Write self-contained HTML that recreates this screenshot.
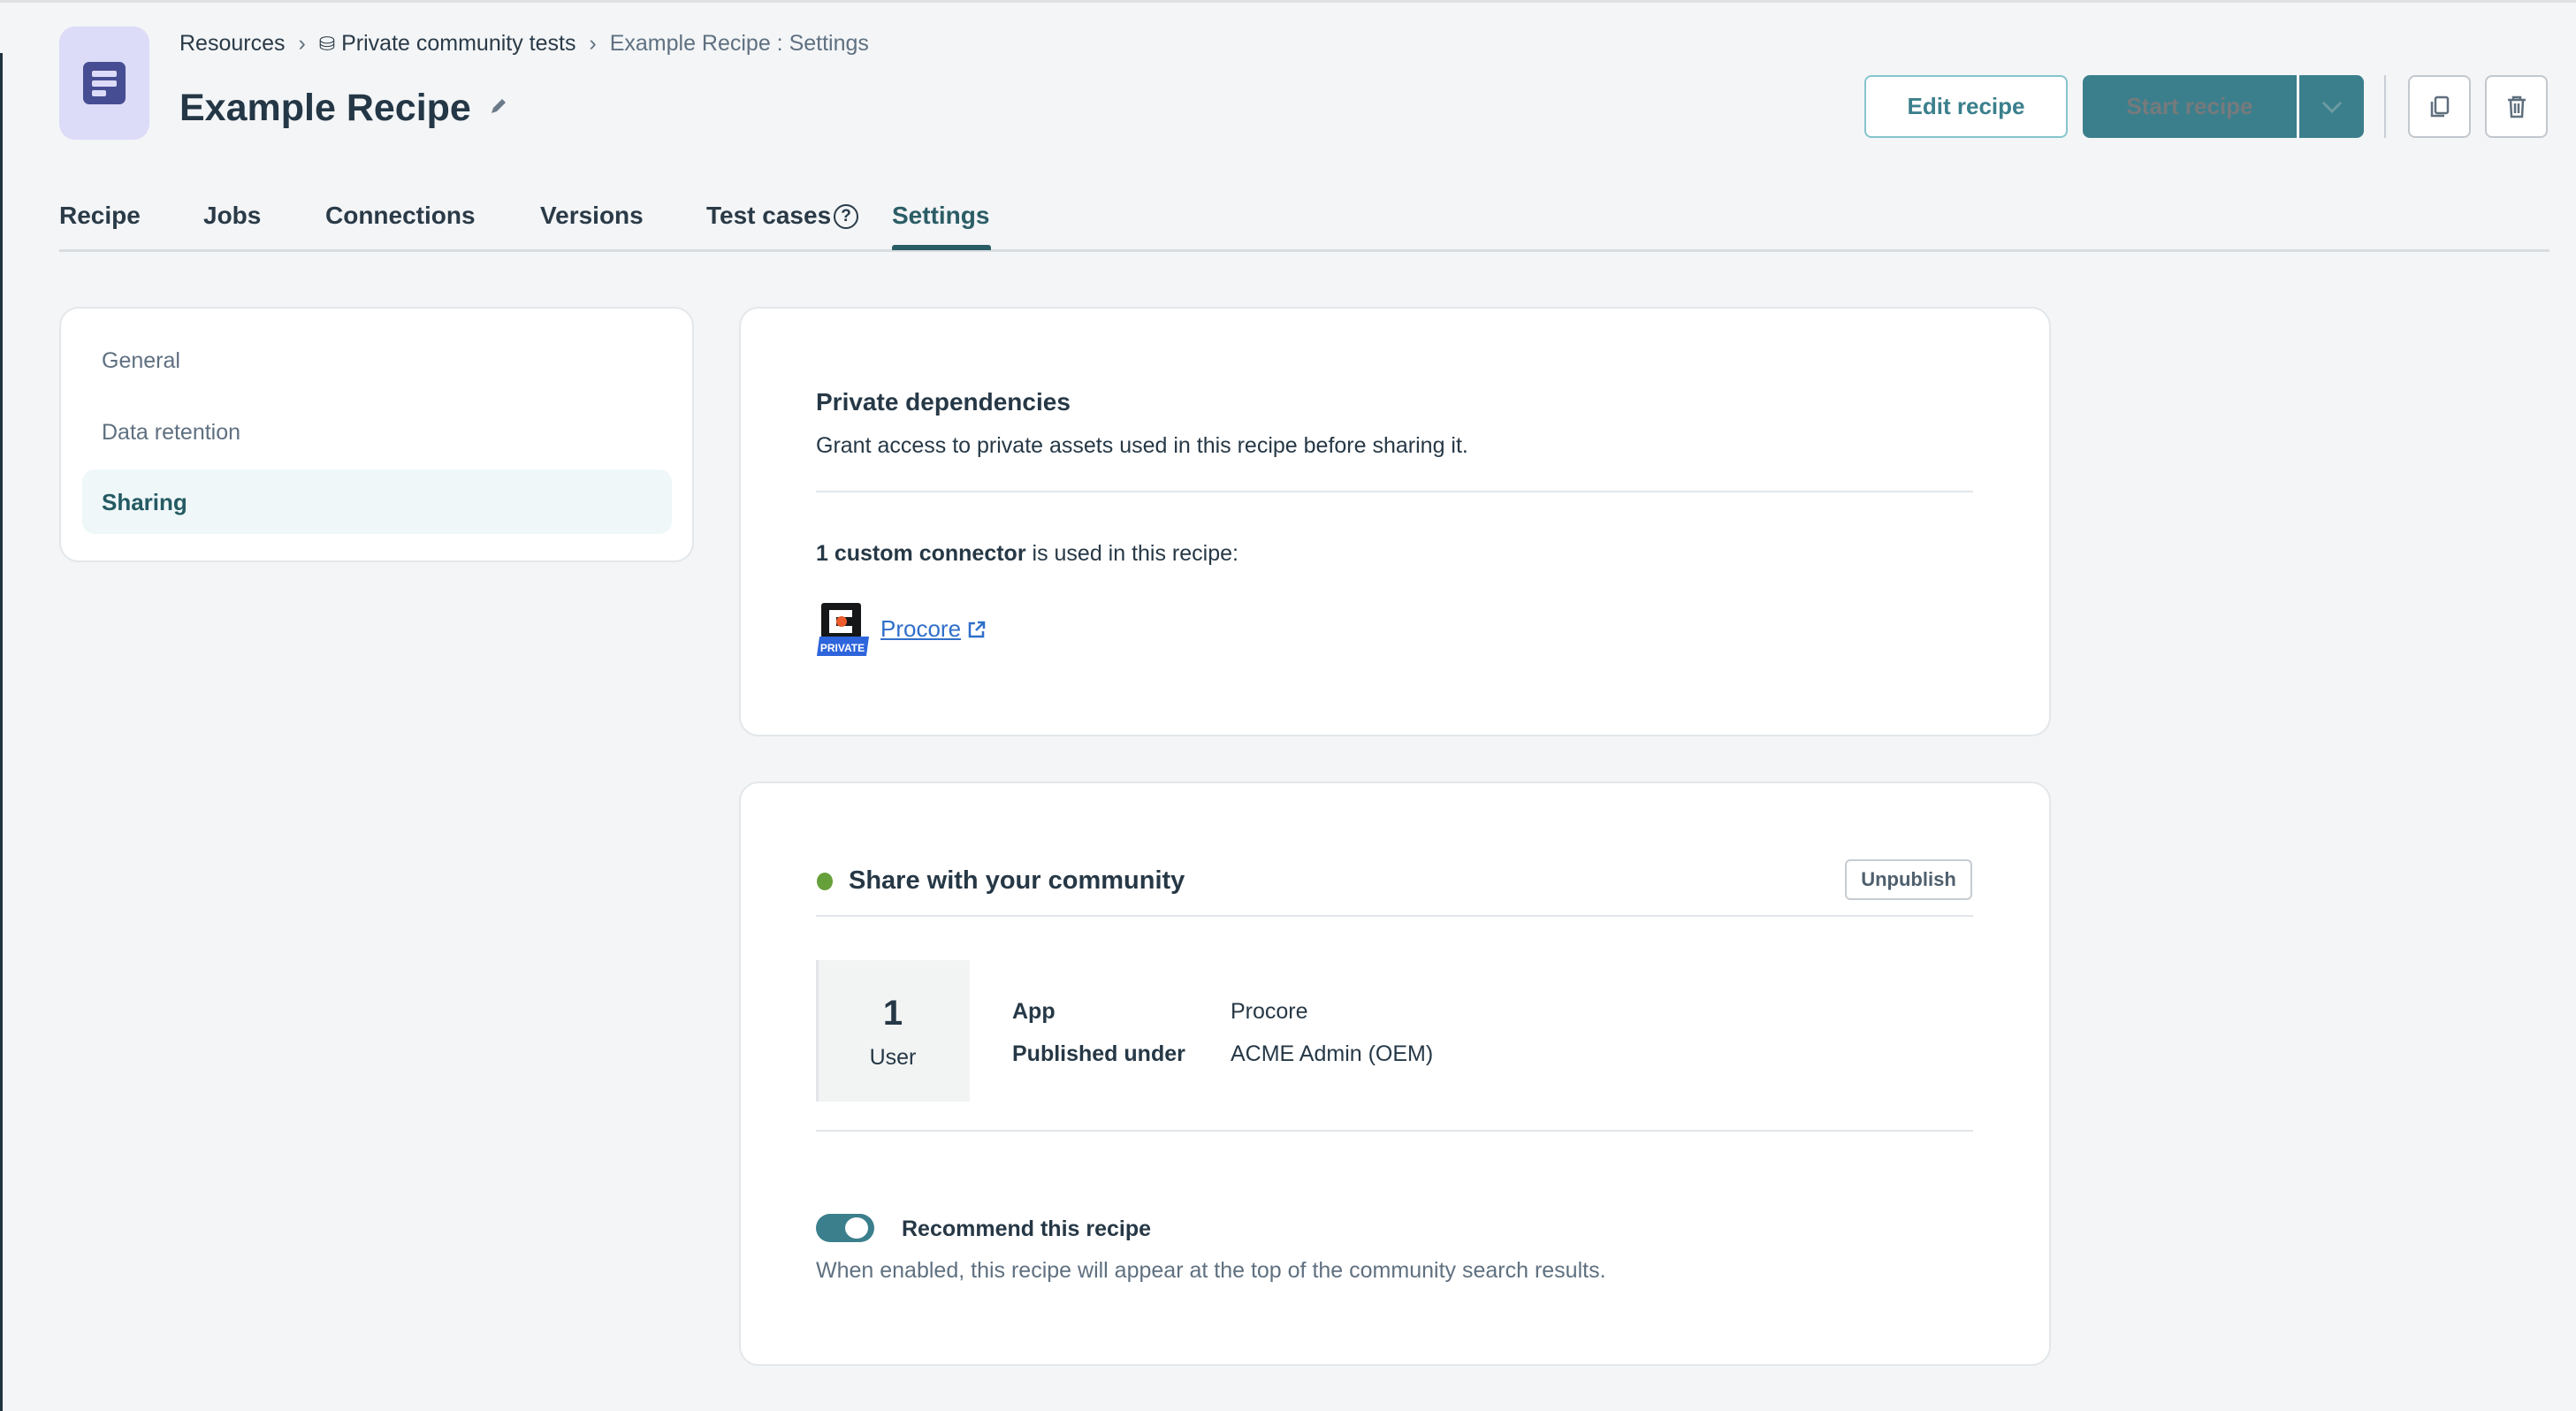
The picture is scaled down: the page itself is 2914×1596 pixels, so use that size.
<!DOCTYPE html>
<html><head><meta charset="utf-8">
<style>
*{margin:0;padding:0;box-sizing:border-box}
body{width:2914px;height:1596px;background:#f3f5f7;font-family:"Liberation Sans",sans-serif;color:#263846;position:relative;overflow:hidden}
.a{position:absolute;white-space:nowrap}
.card{position:absolute;background:#fff;border:2px solid #e3e7ea;border-radius:22px}
.tab{position:absolute;top:228px;font-size:28px;font-weight:bold;color:#2a3a47}
.hr{position:absolute;height:2px;background:#e2e6ea}
.btn{position:absolute;border-radius:8px;display:flex;align-items:center;justify-content:center;font-weight:bold;font-size:26px}
</style></head><body>
<div class="a" style="left:0;top:0;width:2914px;height:3px;background:#dfe2e5"></div>
<div class="a" style="left:0;top:60px;width:3px;height:1536px;background:#1f3340"></div>

<div class="a" style="left:67px;top:30px;width:102px;height:128px;background:#dcdbf8;border-radius:18px"></div>
<svg class="a" style="left:94px;top:70px" width="48" height="48" viewBox="0 0 48 48"><rect width="48" height="48" rx="7" fill="#474d92"/><rect x="10" y="10" width="28" height="7" rx="2" fill="#dcdbf8"/><rect x="10" y="21" width="28" height="7" rx="2" fill="#dcdbf8"/><rect x="10" y="32" width="16" height="7" rx="2" fill="#dcdbf8"/></svg>

<div class="a" style="left:203px;top:35px;font-size:25px;color:#2a3a47">Resources <span style="color:#5f6f7e;margin:0 8px">›</span> <span style="font-size:22px">⛁</span> Private community tests <span style="color:#5f6f7e;margin:0 8px">›</span> <span style="color:#5f7080">Example Recipe : Settings</span></div>
<div class="a" style="left:203px;top:98px;font-size:43px;font-weight:bold;color:#243746">Example Recipe</div>
<svg class="a" style="left:552px;top:108px" width="24" height="24" viewBox="0 0 24 24"><path d="M4 20l2-6L16 4l4 4L10 18z" fill="#6b7a88"/></svg>

<div class="btn" style="left:2109px;top:85px;width:230px;height:71px;background:#fff;border:2px solid #86c4cd;color:#3b7f8c">Edit recipe</div>
<div class="btn" style="left:2356px;top:85px;width:242px;height:71px;background:#3b7f8c;color:#767a7c;border-radius:8px 0 0 8px">Start recipe</div>
<div class="btn" style="left:2601px;top:85px;width:73px;height:71px;background:#3b7f8c;border-radius:0 8px 8px 0"><svg width="26" height="16" viewBox="0 0 26 16"><path d="M3 3l10 10L23 3" stroke="#6f9aa2" stroke-width="3" fill="none"/></svg></div>
<div class="a" style="left:2697px;top:85px;width:2px;height:71px;background:#c8ced4"></div>
<div class="btn" style="left:2724px;top:85px;width:71px;height:71px;background:#fff;border:2px solid #c2c8ce"><svg width="28" height="28" viewBox="0 0 28 28"><rect x="9" y="3" width="14" height="18" rx="2" stroke="#5f6f7e" stroke-width="2.5" fill="none"/><path d="M5 8v16h14" stroke="#5f6f7e" stroke-width="2.5" fill="none"/></svg></div>
<div class="btn" style="left:2811px;top:85px;width:71px;height:71px;background:#fff;border:2px solid #c2c8ce"><svg width="28" height="28" viewBox="0 0 28 28"><path d="M4 6h20M10 6V3h8v3M7 6l1 19h12l1-19M12 10v11M16 10v11" stroke="#5f6f7e" stroke-width="2.5" fill="none"/></svg></div>

<div class="tab" style="left:67px">Recipe</div>
<div class="tab" style="left:230px">Jobs</div>
<div class="tab" style="left:368px">Connections</div>
<div class="tab" style="left:611px">Versions</div>
<div class="tab" style="left:799px">Test cases</div>
<div class="a" style="left:943px;top:231px;width:28px;height:28px;border:2px solid #2a3a47;border-radius:50%;font-size:19px;font-weight:bold;text-align:center;line-height:24px">?</div>
<div class="tab" style="left:1009px;color:#2b5d66">Settings</div>
<div class="hr" style="left:67px;top:282px;width:2817px;height:3px;background:#d8dde1"></div>
<div class="a" style="left:1009px;top:277px;width:112px;height:6px;background:#2b5d66;border-radius:3px 3px 0 0"></div>

<div class="card" style="left:67px;top:347px;width:718px;height:289px"></div>
<div class="a" style="left:115px;top:394px;font-size:25px;color:#5f7080">General</div>
<div class="a" style="left:115px;top:475px;font-size:25px;color:#5f7080">Data retention</div>
<div class="a" style="left:93px;top:531px;width:667px;height:73px;background:#eff7f9;border-radius:14px"></div>
<div class="a" style="left:115px;top:553px;font-size:26px;font-weight:bold;color:#245a63">Sharing</div>

<div class="card" style="left:836px;top:347px;width:1484px;height:486px"></div>
<div class="a" style="left:923px;top:439px;font-size:28px;font-weight:bold">Private dependencies</div>
<div class="a" style="left:923px;top:490px;font-size:25px">Grant access to private assets used in this recipe before sharing it.</div>
<div class="hr" style="left:923px;top:555px;width:1309px"></div>
<div class="a" style="left:923px;top:612px;font-size:25px"><b>1 custom connector</b> is used in this recipe:</div>
<svg class="a" style="left:924px;top:682px" width="62" height="62" viewBox="0 0 62 62"><rect x="5" y="0" width="45" height="40" rx="3" fill="#141618"/><path d="M40 12H18v18h22" stroke="#fff" stroke-width="8" fill="none"/><circle cx="28" cy="21" r="6" fill="#ec5b2b"/><path d="M3 38h56l-3 22H0z" fill="#2f65dc"/><text x="29" y="55" font-size="12" font-weight="bold" fill="#fff" text-anchor="middle" font-family="Liberation Sans">PRIVATE</text></svg>
<div class="a" style="left:996px;top:696px;font-size:26px;color:#2f6fca;text-decoration:underline">Procore</div>
<svg class="a" style="left:1094px;top:701px" width="22" height="22" viewBox="0 0 22 22"><path d="M9 4H3v15h15v-6M12 3h7v7M19 3l-9 9" stroke="#2f6fca" stroke-width="2.5" fill="none"/></svg>

<div class="card" style="left:836px;top:884px;width:1484px;height:661px"></div>
<div class="a" style="left:924px;top:987px;width:18px;height:20px;border-radius:50%;background:#66a03a"></div>
<div class="a" style="left:960px;top:980px;font-size:29px;font-weight:bold">Share with your community</div>
<div class="a" style="left:2087px;top:972px;width:144px;height:46px;border:2px solid #c6ccd2;border-radius:6px;font-size:22px;font-weight:bold;color:#4f5f6d;text-align:center;line-height:42px">Unpublish</div>
<div class="hr" style="left:923px;top:1035px;width:1309px"></div>
<div class="a" style="left:923px;top:1086px;width:174px;height:160px;background:#f2f4f4;border-left:3px solid #e2e6e8"></div>
<div class="a" style="left:923px;top:1124px;width:174px;text-align:center;font-size:40px;font-weight:bold">1</div>
<div class="a" style="left:923px;top:1182px;width:174px;text-align:center;font-size:25px">User</div>
<div class="a" style="left:1145px;top:1130px;font-size:25px;font-weight:bold">App</div>
<div class="a" style="left:1392px;top:1130px;font-size:25px">Procore</div>
<div class="a" style="left:1145px;top:1178px;font-size:25px;font-weight:bold">Published under</div>
<div class="a" style="left:1392px;top:1178px;font-size:25px">ACME Admin (OEM)</div>
<div class="hr" style="left:923px;top:1278px;width:1309px"></div>
<div class="a" style="left:923px;top:1373px;width:66px;height:32px;border-radius:16px;background:#3b7f8c"></div>
<div class="a" style="left:956px;top:1377px;width:26px;height:24px;border-radius:50%;background:#fff"></div>
<div class="a" style="left:1020px;top:1376px;font-size:25px;font-weight:bold">Recommend this recipe</div>
<div class="a" style="left:923px;top:1423px;font-size:25px;color:#5f7080">When enabled, this recipe will appear at the top of the community search results.</div>
</body></html>
